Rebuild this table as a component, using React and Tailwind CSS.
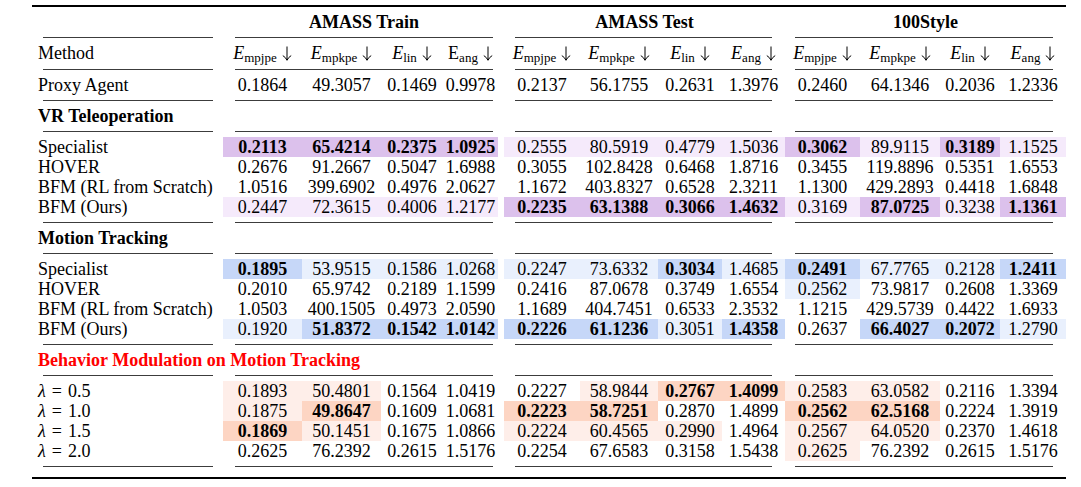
import React from "react";

const COLS =
  "grid grid-cols-[191px_79px_79px_62px_55px_6px_76px_78px_64px_63px_75px_80px_60px_66px]";

const PAL = {
  purple: ["", "bg-[#f5eafb]", "bg-[#dcc1ec]"],
  blue: ["", "bg-[#e9f0fd]", "bg-[#c6d7f8]"],
  orange: ["", "bg-[#feeee9]", "bg-[#fdd5c3]"],
};

const sections = [
  {
    title: "VR Teleoperation",
    red: false,
    pal: "purple",
    rows: [
      ["Specialist", "0.2113 65.4214 0.2375 1.0925 0.2555 80.5919 0.4779 1.5036 0.3062 89.9115 0.3189 1.1525", "222211112121"],
      ["HOVER", "0.2676 91.2667 0.5047 1.6988 0.3055 102.8428 0.6468 1.8716 0.3455 119.8896 0.5351 1.6553", "000000000000"],
      ["BFM (RL from Scratch)", "1.0516 399.6902 0.4976 2.0627 1.1672 403.8327 0.6528 2.3211 1.1300 429.2893 0.4418 1.6848", "000000000000"],
      ["BFM (Ours)", "0.2447 72.3615 0.4006 1.2177 0.2235 63.1388 0.3066 1.4632 0.3169 87.0725 0.3238 1.1361", "111122221212"],
    ],
  },
  {
    title: "Motion Tracking",
    red: false,
    pal: "blue",
    rows: [
      ["Specialist", "0.1895 53.9515 0.1586 1.0268 0.2247 73.6332 0.3034 1.4685 0.2491 67.7765 0.2128 1.2411", "211111212112"],
      ["HOVER", "0.2010 65.9742 0.2189 1.1599 0.2416 87.0678 0.3749 1.6554 0.2562 73.9817 0.2608 1.3369", "000000001000"],
      ["BFM (RL from Scratch)", "1.0503 400.1505 0.4973 2.0590 1.1689 404.7451 0.6533 2.3532 1.1215 429.5739 0.4422 1.6933", "000000000000"],
      ["BFM (Ours)", "0.1920 51.8372 0.1542 1.0142 0.2226 61.1236 0.3051 1.4358 0.2637 66.4027 0.2072 1.2790", "122222120221"],
    ],
  },
  {
    title: "Behavior Modulation on Motion Tracking",
    red: true,
    pal: "orange",
    rows: [
      ["0.5", "0.1893 50.4801 0.1564 1.0419 0.2227 58.9844 0.2767 1.4099 0.2583 63.0582 0.2116 1.3394", "110001221100"],
      ["1.0", "0.1875 49.8647 0.1609 1.0681 0.2223 58.7251 0.2870 1.4899 0.2562 62.5168 0.2224 1.3919", "120022002200"],
      ["1.5", "0.1869 50.1451 0.1675 1.0866 0.2224 60.4565 0.2990 1.4964 0.2567 64.0520 0.2370 1.4618", "210011101100"],
      ["2.0", "0.2625 76.2392 0.2615 1.5176 0.2254 67.6583 0.3158 1.5438 0.2625 76.2392 0.2615 1.5176", "000000001000"],
    ],
  },
];

function CmidRule() {
  return (
    <div className={`${COLS} w-[1034px] ml-[32px] h-px`}>
      <div className="ml-[11px] mr-[10px] h-px bg-[#3c3c3c]" />
      <div className="col-span-4 ml-[12px] mr-[5px] h-px bg-[#3c3c3c]" />
      <div />
      <div className="col-span-4 ml-[11px] mr-[13px] h-px bg-[#3c3c3c]" />
      <div className="col-span-4 ml-[10px] mr-[13px] h-px bg-[#3c3c3c]" />
    </div>
  );
}

function Cells({ values, hl, pal }) {
  const out = [];
  values.forEach((v, i) => {
    if (i === 4) out.push(<div key="gap" />);
    const lvl = hl ? Number(hl[i]) : 0;
    const bg = pal ? PAL[pal][lvl] : "";
    out.push(
      <div
        key={i}
        className={`h-[20px] leading-[20px] text-center whitespace-nowrap ${bg} ${lvl === 2 ? "font-bold" : ""}`}
      >
        {v}
      </div>
    );
  });
  return out;
}

function DataRow({ label, values, hl, pal }) {
  return (
    <div className={`${COLS} w-[1034px] ml-[32px]`}>
      <div className="h-[20px] leading-[20px] pl-[6px] whitespace-nowrap">{label}</div>
      <Cells values={values} hl={hl} pal={pal} />
    </div>
  );
}

function DownArrow() {
  return (
    <svg
      width="10"
      height="15"
      viewBox="0 0 10 15"
      className="inline-block ml-[5px] align-[-2px]"
    >
      <path d="M5 0.5 V14" stroke="#000" strokeWidth="1" fill="none" />
      <path
        d="M0.8 9.6 Q3.6 11.2 5 14.3 Q6.4 11.2 9.2 9.6"
        stroke="#000"
        strokeWidth="1"
        fill="none"
      />
    </svg>
  );
}

function Head({ italic = true, sub }) {
  return (
    <span className="whitespace-nowrap">
      <span className={italic ? "italic" : ""}>E</span>
      <sub className="text-[13px]">{sub}</sub>
      <DownArrow />
    </span>
  );
}

export default function App() {
  const heads = [
    [true, "mpjpe"],
    [true, "mpkpe"],
    [true, "lin"],
    [false, "ang"],
    [true, "mpjpe"],
    [true, "mpkpe"],
    [true, "lin"],
    [true, "ang"],
    [true, "mpjpe"],
    [true, "mpkpe"],
    [true, "lin"],
    [true, "ang"],
  ];
  return (
    <div className="w-[1081px] h-[487px] bg-white text-black font-['Liberation_Serif','DejaVu_Serif',serif] text-[18px] flex flex-col">
      <div className="h-[5px] shrink-0" />
      <div className="w-[1034px] ml-[32px] h-[2px] bg-black shrink-0" />
      {/* group headers */}
      <div className={`${COLS} w-[1034px] ml-[32px] my-[5px] h-[20px] leading-[20px] font-bold`}>
        <div />
        <div className="col-span-4 text-center pl-[7px]">AMASS Train</div>
        <div />
        <div className="col-span-4 text-center">AMASS Test</div>
        <div className="col-span-4 text-center">100Style</div>
      </div>
      <CmidRule />
      {/* column headers */}
      <div className={`${COLS} w-[1034px] ml-[32px] my-[5px] h-[21px] leading-[21px]`}>
        <div className="pl-[6px]">Method</div>
        {heads.map((h, i) => (
          <React.Fragment key={i}>
            {i === 4 && <div />}
            <div className="text-center">
              <Head italic={h[0]} sub={h[1]} />
            </div>
          </React.Fragment>
        ))}
      </div>
      <CmidRule />
      <div className="my-[5px]">
        <DataRow
          label="Proxy Agent"
          values={"0.1864 49.3057 0.1469 0.9978 0.2137 56.1755 0.2631 1.3976 0.2460 64.1346 0.2036 1.2336".split(" ")}
        />
      </div>
      <CmidRule />
      {sections.map((s) => (
        <React.Fragment key={s.title}>
          <div
            className={`my-[5px] ml-[38px] h-[20px] leading-[20px] font-bold whitespace-nowrap ${
              s.red ? "text-[#ff0000]" : ""
            }`}
          >
            {s.title}
          </div>
          <CmidRule />
          <div className="my-[5px]">
            {s.rows.map((r) => (
              <DataRow
                key={r[0]}
                label={
                  s.red ? (
                    <span>
                      <span className="italic">λ</span>
                      <span className="mx-[6px]">=</span>
                      {r[0]}
                    </span>
                  ) : (
                    r[0]
                  )
                }
                values={r[1].split(" ")}
                hl={r[2]}
                pal={s.pal}
              />
            ))}
          </div>
          <CmidRule />
        </React.Fragment>
      ))}
      <div className="mt-[10px] w-[1034px] ml-[32px] h-[2px] bg-black shrink-0" />
    </div>
  );
}
